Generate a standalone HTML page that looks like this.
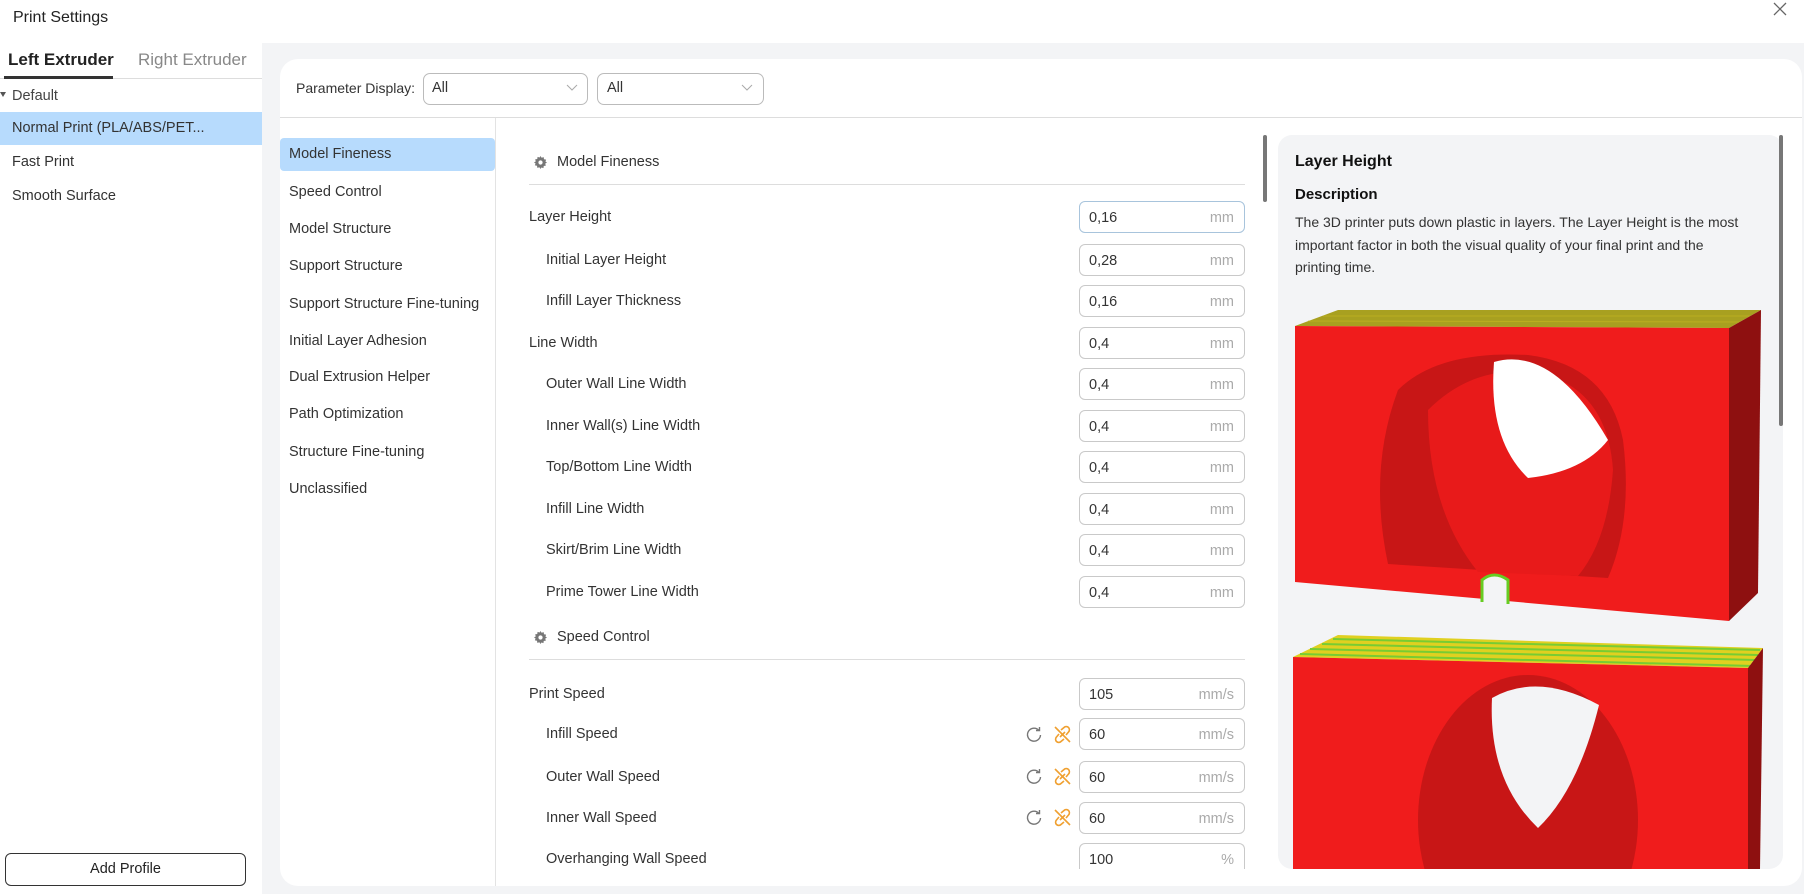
<!DOCTYPE html>
<html><head><meta charset="utf-8"><style>
*{box-sizing:border-box;margin:0;padding:0}
body{width:1804px;height:894px;overflow:hidden;background:#f3f4f6;font-family:"Liberation Sans",sans-serif;color:#333;position:relative;font-size:14.5px}
.a{position:absolute}
.title{left:0;top:0;width:1804px;height:43px;background:#fff;}
.left{left:0;top:43px;width:262px;height:851px;background:#fff}
.card{left:280px;top:59px;width:1522px;height:827px;background:#fff;border-radius:18px}
.t{position:absolute;white-space:nowrap;line-height:1}
.inp{position:absolute;left:1079px;width:166px;height:32px;border:1px solid #c9c9c9;border-radius:6px;background:#fff}
.inp .v{position:absolute;left:9px;top:8px;font-size:14.5px;color:#333}
.inp .u{position:absolute;right:10px;top:8px;font-size:14.5px;color:#aaa}
.lbl{position:absolute;font-size:14.5px;color:#333;white-space:nowrap;line-height:1}
.cat{position:absolute;left:289px;font-size:14.5px;color:#333;white-space:nowrap;line-height:1}
</style></head><body>
<div class="a title"></div>
<div class="t" style="left:13px;top:10px;font-size:16px;color:#222">Print Settings</div>
<svg class="a" style="left:1773px;top:2px" width="14" height="14"><path d="M1 1L13 13M13 1L1 13" stroke="#666" stroke-width="1.3"/></svg>
<div class="a left"></div>
<div class="t" style="left:8px;top:51px;font-size:17px;font-weight:bold;color:#222">Left Extruder</div>
<div class="t" style="left:138px;top:51px;font-size:17px;color:#888">Right Extruder</div>
<div class="a" style="left:0;top:78px;width:262px;height:1px;background:#ddd"></div>
<div class="a" style="left:4px;top:76px;width:109px;height:3px;background:#333"></div>
<svg class="a" style="left:0;top:91px" width="7" height="7"><path d="M0 1L6 1L3 6Z" fill="#555"/></svg>
<div class="t" style="left:12px;top:89px;color:#444">Default</div>
<div class="a" style="left:0;top:112px;width:262px;height:33px;background:#b7dbfd"></div>
<div class="t" style="left:12px;top:121px;color:#333">Normal Print (PLA/ABS/PET...</div>
<div class="t" style="left:12px;top:155px;color:#333">Fast Print</div>
<div class="t" style="left:12px;top:189px;color:#333">Smooth Surface</div>
<div class="a" style="left:5px;top:853px;width:241px;height:33px;border:1px solid #333;border-radius:6px;background:#fff"></div>
<div class="t" style="left:5px;top:862px;width:241px;text-align:center;color:#222">Add Profile</div>

<div class="a card"></div>
<div class="t" style="left:296px;top:81px;color:#333;font-size:14px">Parameter Display:</div>
<div class="a" style="left:423px;top:73px;width:165px;height:32px;border:1px solid #bbb;border-radius:7px"></div>
<div class="t" style="left:432px;top:81px">All</div>
<svg class="a" style="left:566px;top:84px" width="12" height="8"><path d="M1 1L6 6L11 1" stroke="#aaa" fill="none"/></svg>
<div class="a" style="left:597px;top:73px;width:167px;height:32px;border:1px solid #bbb;border-radius:7px"></div>
<div class="t" style="left:607px;top:81px">All</div>
<svg class="a" style="left:741px;top:84px" width="12" height="8"><path d="M1 1L6 6L11 1" stroke="#aaa" fill="none"/></svg>
<div class="a" style="left:280px;top:117px;width:1522px;height:1px;background:#ddd"></div>
<div class="a" style="left:495px;top:118px;width:1px;height:768px;background:#e3e3e3"></div>

<div class="a" style="left:280px;top:138px;width:215px;height:33px;background:#b7dbfd;border-radius:4px"></div>
<div class="cat" style="top:147px">Model Fineness</div>
<div class="cat" style="top:185px">Speed Control</div>
<div class="cat" style="top:222px">Model Structure</div>
<div class="cat" style="top:259px">Support Structure</div>
<div class="cat" style="top:297px">Support Structure Fine-tuning</div>
<div class="cat" style="top:334px">Initial Layer Adhesion</div>
<div class="cat" style="top:370px">Dual Extrusion Helper</div>
<div class="cat" style="top:407px">Path Optimization</div>
<div class="cat" style="top:445px">Structure Fine-tuning</div>
<div class="cat" style="top:482px">Unclassified</div>

<svg class="a" style="left:534px;top:156px" width="13" height="13" viewBox="0 0 16 16"><path fill="#777" d="M8 0l1.4 2.2 2.5-.8.4 2.6 2.6.4-.8 2.5L16 8l-2.2 1.4.8 2.5-2.6.4-.4 2.6-2.5-.8L8 16l-1.4-2.2-2.5.8-.4-2.6-2.6-.4.8-2.5L0 8l2.2-1.4-.8-2.5 2.6-.4.4-2.6 2.5.8z"/><circle cx="8" cy="8" r="2.6" fill="#fff"/></svg>
<div class="lbl" style="left:557px;top:155px">Model Fineness</div>
<div class="a" style="left:529px;top:184px;width:716px;height:1px;background:#ddd"></div>

<div class="lbl" style="left:529px;top:210px">Layer Height</div><div class="inp" style="top:201px;border-color:#a8c4dc"><span class="v">0,16</span><span class="u">mm</span></div>
<div class="lbl" style="left:546px;top:253px">Initial Layer Height</div><div class="inp" style="top:244px"><span class="v">0,28</span><span class="u">mm</span></div>
<div class="lbl" style="left:546px;top:294px">Infill Layer Thickness</div><div class="inp" style="top:285px"><span class="v">0,16</span><span class="u">mm</span></div>
<div class="lbl" style="left:529px;top:336px">Line Width</div><div class="inp" style="top:327px"><span class="v">0,4</span><span class="u">mm</span></div>
<div class="lbl" style="left:546px;top:377px">Outer Wall Line Width</div><div class="inp" style="top:368px"><span class="v">0,4</span><span class="u">mm</span></div>
<div class="lbl" style="left:546px;top:419px">Inner Wall(s) Line Width</div><div class="inp" style="top:410px"><span class="v">0,4</span><span class="u">mm</span></div>
<div class="lbl" style="left:546px;top:460px">Top/Bottom Line Width</div><div class="inp" style="top:451px"><span class="v">0,4</span><span class="u">mm</span></div>
<div class="lbl" style="left:546px;top:502px">Infill Line Width</div><div class="inp" style="top:493px"><span class="v">0,4</span><span class="u">mm</span></div>
<div class="lbl" style="left:546px;top:543px">Skirt/Brim Line Width</div><div class="inp" style="top:534px"><span class="v">0,4</span><span class="u">mm</span></div>
<div class="lbl" style="left:546px;top:585px">Prime Tower Line Width</div><div class="inp" style="top:576px"><span class="v">0,4</span><span class="u">mm</span></div>

<svg class="a" style="left:534px;top:631px" width="13" height="13" viewBox="0 0 16 16"><path fill="#777" d="M8 0l1.4 2.2 2.5-.8.4 2.6 2.6.4-.8 2.5L16 8l-2.2 1.4.8 2.5-2.6.4-.4 2.6-2.5-.8L8 16l-1.4-2.2-2.5.8-.4-2.6-2.6-.4.8-2.5L0 8l2.2-1.4-.8-2.5 2.6-.4.4-2.6 2.5.8z"/><circle cx="8" cy="8" r="2.6" fill="#fff"/></svg>
<div class="lbl" style="left:557px;top:630px">Speed Control</div>
<div class="a" style="left:529px;top:659px;width:716px;height:1px;background:#ddd"></div>

<div class="lbl" style="left:529px;top:687px">Print Speed</div><div class="inp" style="top:678px"><span class="v">105</span><span class="u">mm/s</span></div>
<div class="lbl" style="left:546px;top:727px">Infill Speed</div><div class="inp" style="top:718px"><span class="v">60</span><span class="u">mm/s</span></div>
<div class="lbl" style="left:546px;top:770px">Outer Wall Speed</div><div class="inp" style="top:761px"><span class="v">60</span><span class="u">mm/s</span></div>
<div class="lbl" style="left:546px;top:811px">Inner Wall Speed</div><div class="inp" style="top:802px"><span class="v">60</span><span class="u">mm/s</span></div>
<div class="lbl" style="left:546px;top:852px">Overhanging Wall Speed</div>
<div class="a" style="left:1079px;top:843px;width:166px;height:26px;border:1px solid #c9c9c9;border-bottom:none;border-radius:6px 6px 0 0;background:#fff;overflow:hidden"><span style="position:absolute;left:9px;top:8px">100</span><span style="position:absolute;right:10px;top:8px;color:#aaa">%</span></div>

<svg class="a" style="left:1025px;top:726px" width="18" height="18" viewBox="0 0 18 18"><path d="M14 4.5A6.5 6.5 0 1 0 15.5 9" stroke="#777" stroke-width="1.4" fill="none"/><path d="M11 4.5L14.5 4.5L14.5 1" stroke="#777" stroke-width="1.4" fill="none"/></svg>
<svg class="a" style="left:1025px;top:768px" width="18" height="18" viewBox="0 0 18 18"><path d="M14 4.5A6.5 6.5 0 1 0 15.5 9" stroke="#777" stroke-width="1.4" fill="none"/><path d="M11 4.5L14.5 4.5L14.5 1" stroke="#777" stroke-width="1.4" fill="none"/></svg>
<svg class="a" style="left:1025px;top:809px" width="18" height="18" viewBox="0 0 18 18"><path d="M14 4.5A6.5 6.5 0 1 0 15.5 9" stroke="#777" stroke-width="1.4" fill="none"/><path d="M11 4.5L14.5 4.5L14.5 1" stroke="#777" stroke-width="1.4" fill="none"/></svg>
<svg class="a" style="left:1053px;top:725px" width="19" height="19" viewBox="0 0 19 19"><g stroke="#f0a030" stroke-width="1.6" fill="none"><path d="M8 5L11 2.5a3 3 0 0 1 4.5 4.5L13 10"/><path d="M11 14L8 16.5a3 3 0 0 1-4.5-4.5L6 9"/><path d="M7 12L12 7"/><path d="M2 2L17 17"/></g></svg>
<svg class="a" style="left:1053px;top:767px" width="19" height="19" viewBox="0 0 19 19"><g stroke="#f0a030" stroke-width="1.6" fill="none"><path d="M8 5L11 2.5a3 3 0 0 1 4.5 4.5L13 10"/><path d="M11 14L8 16.5a3 3 0 0 1-4.5-4.5L6 9"/><path d="M7 12L12 7"/><path d="M2 2L17 17"/></g></svg>
<svg class="a" style="left:1053px;top:808px" width="19" height="19" viewBox="0 0 19 19"><g stroke="#f0a030" stroke-width="1.6" fill="none"><path d="M8 5L11 2.5a3 3 0 0 1 4.5 4.5L13 10"/><path d="M11 14L8 16.5a3 3 0 0 1-4.5-4.5L6 9"/><path d="M7 12L12 7"/><path d="M2 2L17 17"/></g></svg>

<div class="a" style="left:1263px;top:135px;width:4px;height:67px;background:#777;border-radius:2px"></div>

<div class="a" style="left:1278px;top:135px;width:505px;height:734px;background:#f3f4f6;border-radius:14px;overflow:hidden">
<div class="t" style="left:17px;top:19px;font-size:16px;font-weight:bold;color:#111">Layer Height</div>
<div class="t" style="left:17px;top:52px;font-size:15px;font-weight:bold;color:#111">Description</div>
<div style="position:absolute;left:17px;top:76px;width:445px;font-size:14px;line-height:22.5px;color:#333">The 3D printer puts down plastic in layers. The Layer Height is the most important factor in both the visual quality of your final print and the printing time.</div>
<svg style="position:absolute;left:0;top:175px" width="505" height="560" viewBox="0 0 505 560">
<path d="M17 16 L60 0 L483 0 L451 18 Z" fill="#a8a020"/>
<g stroke="#c7b820" stroke-width="1" opacity=".6"><path d="M30 11L462 12M45 6L472 6"/></g>
<path d="M17 16 L451 18 L451 311 L17 272 Z" fill="#f01c1c"/>
<path d="M451 18 L483 0 L480 283 L451 311 Z" fill="#8e1010"/>
<path d="M120 80 Q160 40 250 45 Q330 55 345 130 Q355 210 330 268 L110 254 Q90 160 120 80Z" fill="#c81616"/>
<path d="M150 100 Q200 50 270 65 Q330 85 335 160 Q330 230 300 266 L200 262 Q150 200 150 100Z" fill="#e81a1a"/>
<path d="M216 52 Q275 35 330 130 Q305 162 250 168 Q210 130 216 52Z" fill="#fff"/>
<path d="M204 292 L204 270 Q216 260 230 270 L230 294" stroke="#6c2" stroke-width="3" fill="#f3f4f6"/>
<path d="M15 347 L60 325 L485 338 L470 358 Z" fill="#e0d020"/>
<g stroke="#7c3" stroke-width="2"><path d="M22 344L475 356M32 339L478 350M44 334L480 345M55 329L482 340"/></g>
<path d="M15 347 L470 358 L470 560 L15 560 Z" fill="#f01c1c"/>
<path d="M470 358 L485 338 L482 560 L470 560Z" fill="#8e1010"/>
<ellipse cx="250" cy="510" rx="110" ry="145" fill="#c81616"/>
<path d="M214 388 Q260 362 321 395 Q300 480 260 518 Q210 470 214 388Z" fill="#f3f4f6"/>
</svg>
</div>
<div class="a" style="left:1779px;top:135px;width:4px;height:291px;background:#777;border-radius:2px"></div>
</body></html>
